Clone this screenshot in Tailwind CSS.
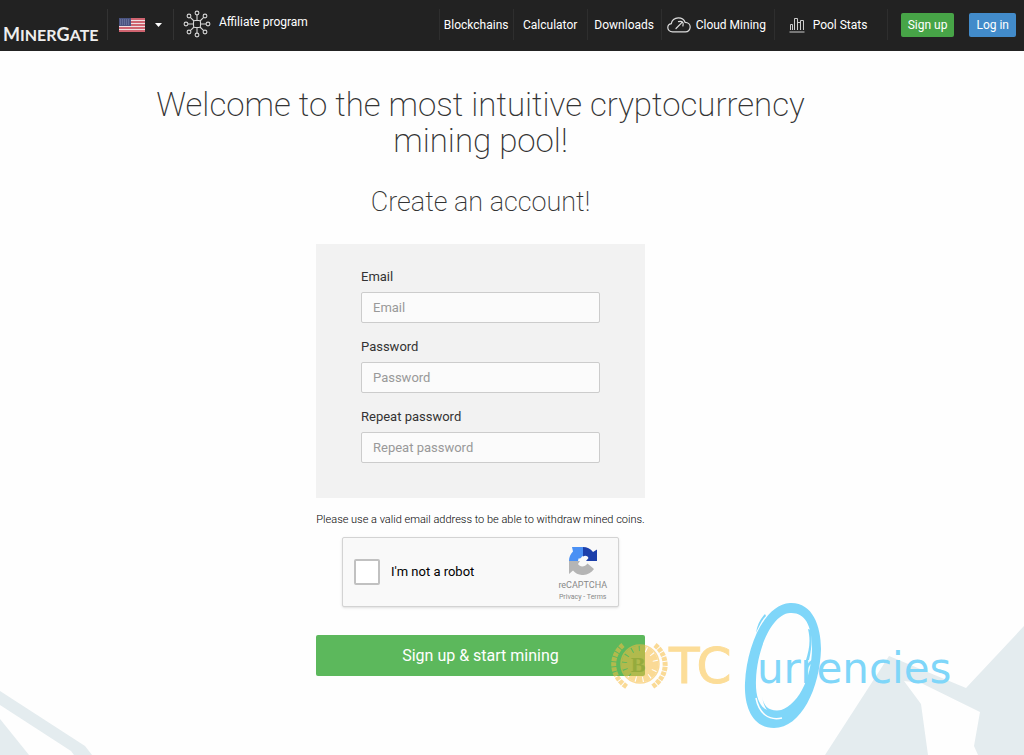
<!DOCTYPE html>
<html lang="en">
  <head>
    <meta charset="UTF-8" />
    <meta name="viewport" content="width=device-width, initial-scale=1.0" />
    <script src="https://cdn.jsdelivr.net/npm/@tailwindcss/browser@4"></script>
    <title>MinerGate - Sign up</title>
  </head>

  <body class="relative min-h-screen overflow-x-hidden bg-[#fefefe] font-['Roboto',sans-serif] text-[13px] text-[#333]">
    <!-- mountains -->
    <svg class="absolute bottom-0 left-0 w-24" viewBox="0 0 96 70" fill="#e4ecef" aria-hidden="true">
      <path d="M0 6L85 61L92 70H74L71 66L0 20Z" />
      <path d="M0 34L29 70H0Z" />
    </svg>
    <svg class="absolute bottom-0 right-0 w-50" viewBox="0 0 200 130" fill="#e4ecef" aria-hidden="true">
      <path d="M1 130L65 31L142 63L200 1V130H154L150 121L156 87L97 58L80 56L97 79L104 130Z" />
    </svg>

    <header class="relative flex h-[51px] items-start justify-between bg-[#222] text-xs text-white">
      <div class="flex">
        <a href="#" class="w-[107px] pl-[3px] pt-[23px] font-['Lato',sans-serif] text-lg leading-5 font-bold text-[#eee]">M<span class="text-base">INER</span>G<span class="text-base">ATE</span></a>
        <div class="mt-[9px] flex h-[31px] items-center border-x border-[#333]">
          <button type="button" class="flex items-center gap-[10px] px-[11px]" aria-label="Language">
            <svg class="h-[14px] w-[26px]" viewBox="0 0 26 14">
              <path fill="#f0dfe1" d="M0 0h26v14H0z" />
              <path fill="#cf6470" d="M0 0h26v2H0zM0 3h26v2H0zM0 6h26v2H0zM0 9h26v2H0zM0 12h26v2H0z" />
              <path fill="#4a5380" d="M0 0h12v8H0z" />
              <path stroke="#7f88ae" stroke-dasharray="1 1" d="M1 2h10M1 4h10M1 6h10" />
            </svg>
            <svg class="h-1 w-[7px]" viewBox="0 0 7 4" fill="#fff"><path d="M0 0h7L3.500 4z" /></svg>
          </button>
        </div>
        <a href="#" class="flex gap-2 pt-[10px] pl-[9px]">
          <svg class="size-7" viewBox="0 0 28 28" fill="none" stroke="#d5d5d5" stroke-width="1.1">
            <rect x="10.500" y="10.500" width="7" height="7" rx="1.500" />
            <path d="M14 10.500V5M14 17.500V23M10.500 14H5M17.500 14H23M11 11L7.300 7.300M17 11l3.700-3.700M11 17l-3.700 3.700M17 17l3.700 3.700" />
            <circle cx="14" cy="3" r="1.900" /><circle cx="14" cy="25" r="1.900" />
            <circle cx="3" cy="14" r="1.900" /><circle cx="25" cy="14" r="1.900" />
            <circle cx="6" cy="6" r="1.900" /><circle cx="22" cy="6" r="1.900" />
            <circle cx="6" cy="22" r="1.900" /><circle cx="22" cy="22" r="1.900" />
          </svg>
          <span class="pt-[2px] leading-5">Affiliate program</span>
        </a>
      </div>

      <div class="flex items-center pt-[9px] pr-2">
        <nav class="flex h-[31px] border-r border-[#2e2e2e]">
          <a href="#" class="flex w-[74px] items-center justify-center border-l border-[#2e2e2e]">Blockchains</a>
          <a href="#" class="flex w-[74px] items-center justify-center border-l border-[#2e2e2e]">Calculator</a>
          <a href="#" class="flex w-[74px] items-center justify-center border-l border-[#2e2e2e]">Downloads</a>
          <a href="#" class="flex w-[113px] items-center gap-[5px] border-l border-[#2e2e2e] pl-[5px]">
            <svg class="h-4 w-6" viewBox="0 0 24 16" fill="none" stroke="#ddd" stroke-width="1.200" stroke-linecap="round">
              <path d="M5.500 14.800C2.800 14.800.8 13 .8 10.700C.8 8.600 2.300 7 4.300 6.700C4.600 3.300 7.600.8 11.300.8C14.500.8 17.200 2.600 18.100 5.300C21 5.300 23.200 7.400 23.200 10.100C23.200 12.800 21.200 14.800 18.400 14.800Z" />
              <path d="M9 11.500L14.800 5.700M11.500 4.700C13.500 4.200 15.300 4.800 15.600 5.100C16 5.500 16.400 7.200 15.900 9" />
            </svg>
            Cloud Mining
          </a>
          <a href="#" class="flex w-[113px] items-center gap-2 border-l border-[#2e2e2e] pl-[14px]">
            <svg class="size-4" viewBox="0 0 16 16" fill="none" stroke="#ccc">
              <path d="M1.500 13V7.500h2V13M5.500 13V1.500h3V13M8.500 5.500h3V13M11.500 13V3.500h3V13" />
              <path d="M.5 15h15" />
            </svg>
            Pool Stats
          </a>
        </nav>
        <a href="#" class="ml-[13px] rounded-xs bg-[#47a447] px-[7px] leading-6">Sign up</a>
        <a href="#" class="ml-[15px] rounded-xs bg-[#428bca] px-[7px] leading-6">Log in</a>
      </div>
    </header>

    <main class="relative flex flex-col items-center pt-9 pr-[63px] pb-16">
      <h1 class="max-w-[700px] text-center text-[33px] leading-9 font-extralight">Welcome to the most intuitive cryptocurrency mining pool!</h1>
      <h2 class="mt-[25px] text-center text-[27px] leading-9 font-extralight">Create an account!</h2>

      <form class="mt-6 flex w-[329px] flex-col items-center">
        <div class="w-full bg-[#f2f2f2] px-[45px] pt-[23px] pb-[35px]">
          <label for="email" class="block leading-5">Email</label>
          <input id="email" type="email" placeholder="Email" class="mt-[5px] h-[31px] w-full rounded-xs border border-[#ccc] bg-[#fbfbfb] px-[11px] placeholder:text-[#999]" />
          <label for="password" class="mt-[14px] block leading-5">Password</label>
          <input id="password" type="password" placeholder="Password" class="mt-[5px] h-[31px] w-full rounded-xs border border-[#ccc] bg-[#fbfbfb] px-[11px] placeholder:text-[#999]" />
          <label for="repeat" class="mt-[14px] block leading-5">Repeat password</label>
          <input id="repeat" type="password" placeholder="Repeat password" class="mt-[5px] h-[31px] w-full rounded-xs border border-[#ccc] bg-[#fbfbfb] px-[11px] placeholder:text-[#999]" />
        </div>
        <p class="mt-[14px] text-[11px] leading-4 font-light whitespace-nowrap text-black">Please use a valid email address to be able to withdraw mined coins.</p>

        <div class="mt-[9px] flex h-[70px] w-[277px] items-center rounded-xs border border-[#d3d3d3] bg-[#f9f9f9] px-[11px] text-black shadow-sm">
          <input id="robot" type="checkbox" class="size-[26px] appearance-none rounded-xs border-2 border-[#c1c1c1] bg-white" />
          <label for="robot" class="ml-[11px] grow">I'm not a robot</label>
          <div class="flex flex-col items-center pt-1 text-[#888]">
            <svg class="size-7" viewBox="0 0 28 28" aria-hidden="true">
              <path fill="#4a90f4" d="M14 0V9C12 9.500 12.500 12 9.500 11.500L9 14H0C0 10 1.500 7 4 4.500L3 0Z" />
              <path fill="#1c3faa" d="M14 0C18 0 21.500 1.500 24 5L28 2.500V14H17L19.500 11C18.500 8.500 16 8 14 9.500Z" />
              <path fill="#b5b5b5" d="M0 14H11L9 17C11 20.500 16 20 18.500 16.500L25 22C20 29.500 9 30 4 23.500L0 27Z" />
            </svg>
            <span class="mt-[2px] text-[9px] leading-4">reCAPTCHA</span>
            <span class="text-[7px] leading-2"><a href="#">Privacy</a> - <a href="#">Terms</a></span>
          </div>
        </div>

        <button type="submit" class="mt-7 h-[41px] w-full rounded-xs bg-[#5cb85c] text-base text-white">Sign up &amp; start mining</button>
      </form>
    </main>

    <!-- watermark -->
    <svg class="pointer-events-none absolute right-[64px] bottom-[25px] h-[130px] w-[350px]" viewBox="610 600 350 130">
      <g opacity=".55" fill="none" stroke="#f8bd42">
        <circle cx="640" cy="664" r="15" stroke-width="7" stroke-dasharray="6 1" />
        <circle cx="640" cy="664" r="13" fill="#f8bd42" stroke="none" />
        <circle cx="640" cy="664" r="19" stroke-width="1.500" />
        <path stroke-width="5" stroke-dasharray="4 1" d="M623 645C610 656 610 676 627 687M655 645C669 656 669 676 652 687" />
      </g>
      <text x="638" y="672" text-anchor="middle" font-family="Liberation Serif, serif" font-weight="700" font-size="22" fill="#8fa83a" opacity=".8">B</text>
      <text x="669" y="683" font-family="DejaVu Sans, sans-serif" font-size="50" fill="#fcdd98" stroke="#fcdd98">TC</text>
      <path fill="#7fd6f9" fill-rule="evenodd" d="M790 603C812 602 821 625 821 649C820 688 801 728 774 728C752 728 744 706 745 683C747 643 766 604 790 603ZM790 613C772 614 757 649 756 680C755 704 764 713 777 711C797 708 812 679 812 648C812 624 804 612 790 613Z" />
      <path fill="#7fd6f9" d="M808 629C811 641 809 650 806 660L809 660C812 648 812 638 811 630ZM765 614C760 619 757 626 756 633C759 626 762 620 766 616Z" />
      <path fill="#7fd6f9" d="M762 696C764 712 777 715 798 704L786 720C775 722 764 712 762 696Z" />
      <path fill="none" stroke="#fefefe" stroke-width="1.500" d="M756 698C759 713 768 721 782 718" />
      <text x="757" y="683" font-family="DejaVu Sans, sans-serif" font-size="42" fill="#7fd6f9">urrencies</text>
    </svg>
  </body>
</html>
